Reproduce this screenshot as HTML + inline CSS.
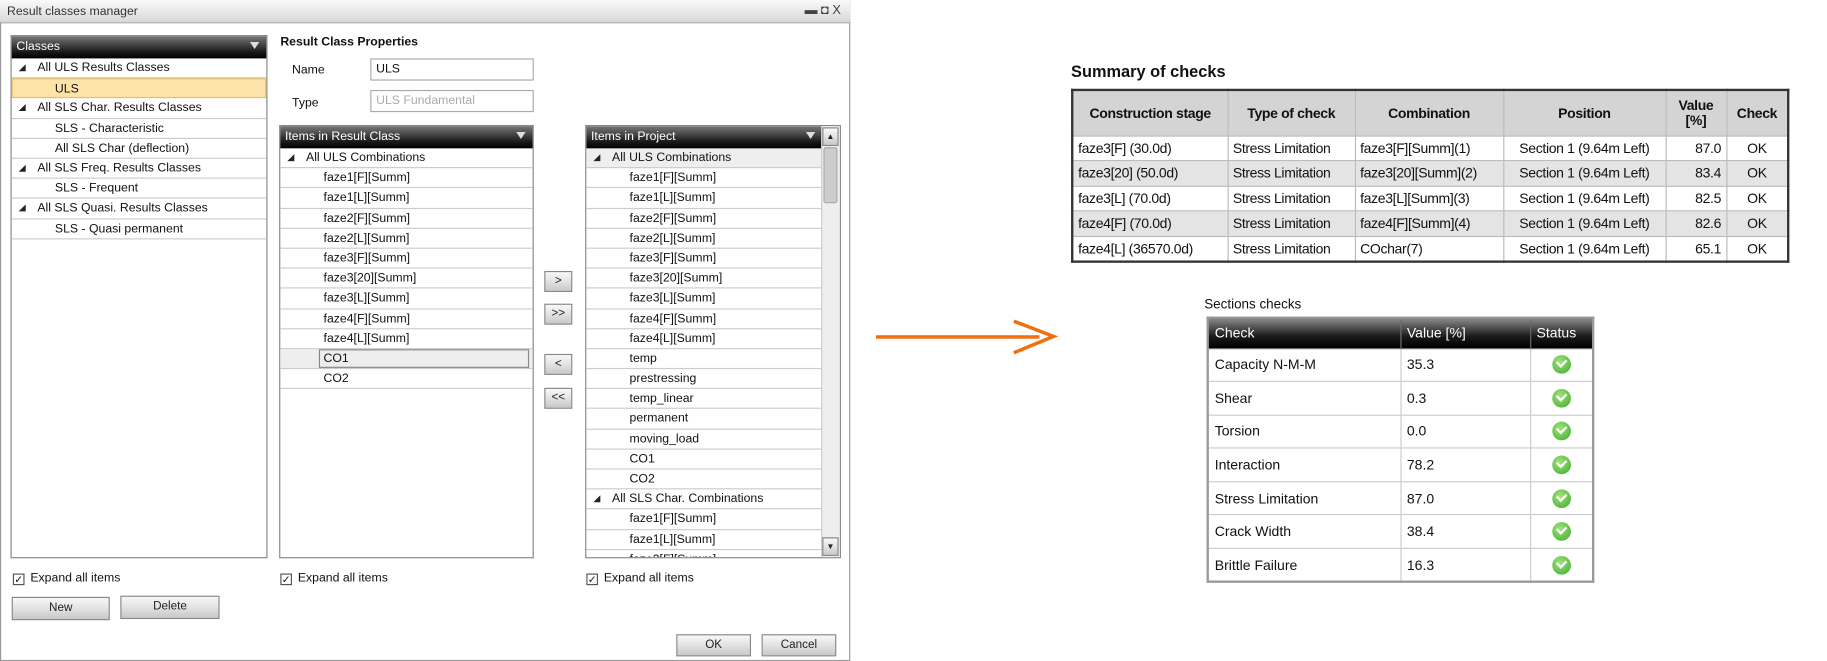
<!DOCTYPE html>
<html><head><meta charset="utf-8"><style>
*{box-sizing:border-box;margin:0;padding:0}
html,body{width:1827px;height:661px;overflow:hidden;background:#fff}
#w{position:absolute;left:0;top:0;width:1564px;height:566px;transform:scale(1.168);transform-origin:0 0;font-family:"Liberation Sans",sans-serif;font-size:10.5px;color:#111}
.a{position:absolute}
.dlg{left:0;top:0;width:728px;height:566px;border:1px solid #999;background:#fff}
.title{left:0;top:0;width:728px;height:20px;background:linear-gradient(#fafafa,#d8d8d8);border-bottom:1px solid #aaa;padding:4px 6px;font-size:10.5px;color:#333}
.panel{border:1px solid #888;background:#fff}
.hdr{height:19px;background:linear-gradient(#777,#1a1a1a 70%,#000);color:#fff;padding:3px 4px;font-size:10.5px;position:relative}
.hdr:after{content:"";position:absolute;right:6px;top:5px;border-left:4px solid transparent;border-right:4px solid transparent;border-top:6px solid #ddd}
.row{height:17.2px;border-bottom:1px solid #ccc;line-height:16px;white-space:nowrap}
.t{display:inline-block;width:0;height:0;border-left:6px solid transparent;border-bottom:6px solid #222;margin:0 10px 0 6px}
.btn{border:1px solid #888;background:linear-gradient(#f8f8f8,#e2e2e2 50%,#c8c8c8);text-align:center;font-size:10px;line-height:16px;color:#222}
.cb{display:inline-block;width:10px;height:10px;border:1px solid #555;vertical-align:-1px;margin-right:5px;font-size:9px;line-height:8px;text-align:center}
.in{border:1px solid #aaa;background:#fff;padding:2px 4px;height:19px}
table{border-collapse:collapse;font-family:"Liberation Sans Narrow","Liberation Sans",sans-serif}
.sum{font-size:12px;letter-spacing:-0.3px}
.sum td,.sum th{border:1px solid #bbb;padding:0 4px;height:21.5px;white-space:nowrap}
.sum th{background:#d4d4d4;font-weight:bold;height:39px;text-align:center}
.sum tr.g td{background:#e4e4e4}
.sec{font-size:12px;font-family:"Liberation Sans",sans-serif}
.sec td,.sec th{border:1px solid #ccc;padding:0 5px;height:28.6px;text-align:left}
.sec th{background:linear-gradient(#888,#1a1a1a 60%,#000);color:#fff;font-weight:normal;height:26px;border-color:#666}
.ok{display:inline-block;width:16px;height:16px;border-radius:50%;background:radial-gradient(circle at 40% 35%,#9fe27a,#3daa2c);position:relative;vertical-align:middle}
.ok:after{content:"";position:absolute;left:4px;top:3px;width:6px;height:4px;border-left:2px solid #fff;border-bottom:2px solid #fff;transform:rotate(-45deg)}
</style></head><body><div id="w">
<div class="a dlg"></div>
<div class="a title">Result classes manager<span style="position:absolute;right:8px;top:3px;color:#444;font-size:11px">▬ ◘ X</span></div>

<div class="a panel" style="left:9px;top:30px;width:220px;height:448px">
<div class="hdr">Classes</div>
<div class="row"><span class="t"></span>All ULS Results Classes</div>
<div class="row" style="background:#fde3a8;border:1px solid #e0c070;padding-left:36px">ULS</div>
<div class="row"><span class="t"></span>All SLS Char. Results Classes</div>
<div class="row" style="padding-left:37px">SLS - Characteristic</div>
<div class="row" style="padding-left:37px">All SLS Char (deflection)</div>
<div class="row"><span class="t"></span>All SLS Freq. Results Classes</div>
<div class="row" style="padding-left:37px">SLS - Frequent</div>
<div class="row"><span class="t"></span>All SLS Quasi. Results Classes</div>
<div class="row" style="padding-left:37px">SLS - Quasi permanent</div>
</div>

<div class="a" style="left:240px;top:30px;font-weight:bold">Result Class Properties</div>
<div class="a" style="left:250px;top:54px">Name</div>
<div class="a in" style="left:317px;top:50px;width:140px">ULS</div>
<div class="a" style="left:250px;top:82px">Type</div>
<div class="a in" style="left:317px;top:77px;width:140px;color:#aaa">ULS Fundamental</div>

<div class="a panel" style="left:239px;top:107px;width:218px;height:371px">
<div class="hdr">Items in Result Class</div>
<div class="row"><span class="t"></span>All ULS Combinations</div>
<div class="row" style="padding-left:37px">faze1[F][Summ]</div>
<div class="row" style="padding-left:37px">faze1[L][Summ]</div>
<div class="row" style="padding-left:37px">faze2[F][Summ]</div>
<div class="row" style="padding-left:37px">faze2[L][Summ]</div>
<div class="row" style="padding-left:37px">faze3[F][Summ]</div>
<div class="row" style="padding-left:37px">faze3[20][Summ]</div>
<div class="row" style="padding-left:37px">faze3[L][Summ]</div>
<div class="row" style="padding-left:37px">faze4[F][Summ]</div>
<div class="row" style="padding-left:37px">faze4[L][Summ]</div>
<div class="row" style="padding-left:0;background:#eee"><span style="display:inline-block;margin-left:33px;padding-left:3px;border:1px solid #888;width:180px;height:16px;line-height:14px">CO1</span></div>
<div class="row" style="padding-left:37px">CO2</div>
</div>

<div class="a btn" style="left:466px;top:232px;width:24px;height:18px">&gt;</div>
<div class="a btn" style="left:466px;top:260px;width:24px;height:18px">&gt;&gt;</div>
<div class="a btn" style="left:466px;top:303px;width:24px;height:18px">&lt;</div>
<div class="a btn" style="left:466px;top:332px;width:24px;height:18px">&lt;&lt;</div>

<div class="a panel" style="left:501px;top:107px;width:219px;height:371px;overflow:hidden">
<div style="width:202px">
<div class="hdr">Items in Project</div>
<div class="row" style="background:#eee"><span class="t"></span>All ULS Combinations</div>
<div class="row" style="padding-left:37px">faze1[F][Summ]</div>
<div class="row" style="padding-left:37px">faze1[L][Summ]</div>
<div class="row" style="padding-left:37px">faze2[F][Summ]</div>
<div class="row" style="padding-left:37px">faze2[L][Summ]</div>
<div class="row" style="padding-left:37px">faze3[F][Summ]</div>
<div class="row" style="padding-left:37px">faze3[20][Summ]</div>
<div class="row" style="padding-left:37px">faze3[L][Summ]</div>
<div class="row" style="padding-left:37px">faze4[F][Summ]</div>
<div class="row" style="padding-left:37px">faze4[L][Summ]</div>
<div class="row" style="padding-left:37px">temp</div>
<div class="row" style="padding-left:37px">prestressing</div>
<div class="row" style="padding-left:37px">temp_linear</div>
<div class="row" style="padding-left:37px">permanent</div>
<div class="row" style="padding-left:37px">moving_load</div>
<div class="row" style="padding-left:37px">CO1</div>
<div class="row" style="padding-left:37px">CO2</div>
<div class="row"><span class="t"></span>All SLS Char. Combinations</div>
<div class="row" style="padding-left:37px">faze1[F][Summ]</div>
<div class="row" style="padding-left:37px">faze1[L][Summ]</div>
<div class="row" style="padding-left:37px">faze2[F][Summ]</div>
</div>
<div class="a" style="right:0;top:0;width:16px;height:369px;background:#eee;border-left:1px solid #ccc"></div>
<div class="a btn" style="right:1px;top:1px;width:14px;height:16px;font-size:7px">▲</div>
<div class="a" style="right:2px;top:18px;width:12px;height:48px;background:#ccc;border:1px solid #aaa;border-radius:2px"></div>
<div class="a btn" style="right:1px;bottom:1px;width:14px;height:16px;font-size:7px">▼</div>
</div>

<div class="a" style="left:11px;top:489px"><span class="cb">✓</span>Expand all items</div>
<div class="a" style="left:240px;top:489px"><span class="cb">✓</span>Expand all items</div>
<div class="a" style="left:502px;top:489px"><span class="cb">✓</span>Expand all items</div>
<div class="a btn" style="left:10px;top:511px;width:84px;height:20px;line-height:18px">New</div>
<div class="a btn" style="left:103px;top:510px;width:85px;height:20px;line-height:18px">Delete</div>
<div class="a btn" style="left:579px;top:543px;width:64px;height:19px;line-height:17px">OK</div>
<div class="a btn" style="left:652px;top:543px;width:64px;height:19px;line-height:17px">Cancel</div>

<div class="a" style="left:750px;top:287px;width:140px;height:3px;background:#f07010"></div>
<svg class="a" style="left:860px;top:272px" width="50" height="34"><path d="M8 3 L42 16 L8 30" fill="none" stroke="#f07010" stroke-width="3"/></svg>

<div class="a" style="left:917px;top:53px;font-weight:bold;font-size:14px;font-family:'Liberation Sans Narrow','Liberation Sans',sans-serif">Summary of checks</div>
<table class="a sum" style="left:917px;top:76px;width:615px;border:2px solid #333">
<tr><th style="width:133px">Construction stage</th><th style="width:109px">Type of check</th><th style="width:127px">Combination</th><th style="width:139px">Position</th><th style="width:52px;line-height:13px">Value<br>[%]</th><th>Check</th></tr>
<tr><td>faze3[F] (30.0d)</td><td>Stress Limitation</td><td>faze3[F][Summ](1)</td><td style="text-align:center">Section 1 (9.64m Left)</td><td style="text-align:right">87.0</td><td style="text-align:center">OK</td></tr>
<tr class="g"><td>faze3[20] (50.0d)</td><td>Stress Limitation</td><td>faze3[20][Summ](2)</td><td style="text-align:center">Section 1 (9.64m Left)</td><td style="text-align:right">83.4</td><td style="text-align:center">OK</td></tr>
<tr><td>faze3[L] (70.0d)</td><td>Stress Limitation</td><td>faze3[L][Summ](3)</td><td style="text-align:center">Section 1 (9.64m Left)</td><td style="text-align:right">82.5</td><td style="text-align:center">OK</td></tr>
<tr class="g"><td>faze4[F] (70.0d)</td><td>Stress Limitation</td><td>faze4[F][Summ](4)</td><td style="text-align:center">Section 1 (9.64m Left)</td><td style="text-align:right">82.6</td><td style="text-align:center">OK</td></tr>
<tr><td>faze4[L] (36570.0d)</td><td>Stress Limitation</td><td>COchar(7)</td><td style="text-align:center">Section 1 (9.64m Left)</td><td style="text-align:right">65.1</td><td style="text-align:center">OK</td></tr>
</table>

<div class="a" style="left:1031px;top:255px;font-size:11.5px">Sections checks</div>
<table class="a sec" style="left:1033px;top:271px;width:332px;border:2px solid #999">
<tr><th style="width:165px">Check</th><th style="width:111px">Value [%]</th><th>Status</th></tr>
<tr><td>Capacity N-M-M</td><td>35.3</td><td style="text-align:center"><span class="ok"></span></td></tr>
<tr><td>Shear</td><td>0.3</td><td style="text-align:center"><span class="ok"></span></td></tr>
<tr><td>Torsion</td><td>0.0</td><td style="text-align:center"><span class="ok"></span></td></tr>
<tr><td>Interaction</td><td>78.2</td><td style="text-align:center"><span class="ok"></span></td></tr>
<tr><td>Stress Limitation</td><td>87.0</td><td style="text-align:center"><span class="ok"></span></td></tr>
<tr><td>Crack Width</td><td>38.4</td><td style="text-align:center"><span class="ok"></span></td></tr>
<tr><td>Brittle Failure</td><td>16.3</td><td style="text-align:center"><span class="ok"></span></td></tr>
</table>
</div></body></html>
